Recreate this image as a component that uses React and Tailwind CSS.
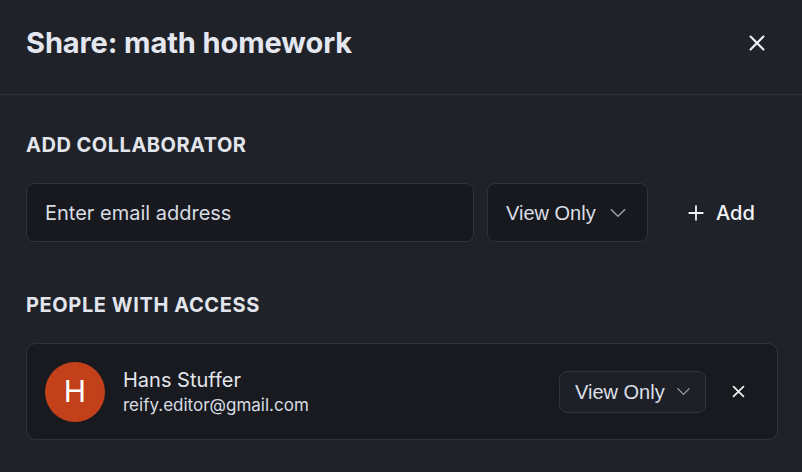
import React from 'react';

const Chevron = ({ className }) => (
  <svg className={className} viewBox="0 0 24 24" fill="none" stroke="currentColor" strokeWidth="1.8" strokeLinecap="round" strokeLinejoin="round">
    <path d="M4 8l8 8 8-8" />
  </svg>
);

const Cross = ({ className }) => (
  <svg className={className} viewBox="0 0 24 24" fill="none" stroke="currentColor" strokeWidth="2.4" strokeLinecap="round">
    <path d="M5 5l14 14M19 5L5 19" />
  </svg>
);

const App = () => {
  return (
    <div className="w-[802px] h-[472px] bg-[#1f2229] text-[#e5e7ee] overflow-hidden" style={{ fontFamily: 'Inter, "Noto Sans", sans-serif' }}>
      <div className="h-[95px] flex items-center justify-between pl-[26px] pr-[34px] border-b border-[#2f333c]">
        <h2 className="text-[29px] font-bold tracking-[-0.1px] text-[#e4e7ef] -mt-[8px]">Share: math homework</h2>
        <button className="text-[#eef0f4] -mt-[8px]">
          <Cross className="w-[22px] h-[22px]" />
        </button>
      </div>

      <div className="px-[26px]">
        <h3 className="mt-[36px] text-[20px] leading-[28px] font-bold tracking-[0.5px] text-[#e2e5ec]">ADD COLLABORATOR</h3>

        <div className="mt-[24px] flex items-center h-[59px]">
          <div className="w-[448px] h-full rounded-[8px] border border-[#30333c] bg-[#17191f] flex items-center px-[18px] text-[20px] text-[#d9dce3]">
            Enter email address
          </div>
          <div className="ml-[13px] w-[161px] h-full rounded-[8px] border border-[#30333c] bg-[#17191f] flex items-center pl-[18px] text-[20px] text-[#dcdfe6]" style={{ fontFamily: '"Liberation Sans", Arial, sans-serif' }}>
            View Only
            <Chevron className="ml-[12px] w-[20px] h-[20px] text-[#9a9ea8]" />
          </div>
          <button className="ml-[39px] flex items-center text-[20px] font-medium text-[#f3f4f7]">
            <svg className="w-[18px] h-[18px] mr-[11px]" viewBox="0 0 24 24" fill="none" stroke="currentColor" strokeWidth="2.4" strokeLinecap="round">
              <path d="M12 3v18M3 12h18" />
            </svg>
            Add
          </button>
        </div>

        <h3 className="mt-[49px] text-[20px] leading-[28px] font-bold tracking-[0.6px] text-[#e2e5ec]">PEOPLE WITH ACCESS</h3>

        <div className="mt-[24px] w-[752px] h-[97px] rounded-[10px] border border-[#30333c] bg-[#181a20] flex items-center pl-[18px] pr-[30px]">
          <div className="w-[60px] h-[60px] rounded-full bg-[#c2401a] flex items-center justify-center text-[30px] text-white">H</div>
          <div className="ml-[18px] flex flex-col">
            <span className="text-[20px] leading-[26px] text-[#e2e5ec]">Hans Stuffer</span>
            <span className="text-[17px] leading-[24px] text-[#d9dce3]">reify.editor@gmail.com</span>
          </div>
          <div className="ml-auto w-[147px] h-[42px] rounded-[8px] border border-[#30333c] bg-[#1d2027] flex items-center pl-[15px] text-[20px] text-[#dcdfe6]" style={{ fontFamily: '"Liberation Sans", Arial, sans-serif' }}>
            View Only
            <Chevron className="ml-[10px] w-[17px] h-[17px] text-[#9a9ea8]" />
          </div>
          <button className="ml-[24px] text-[#eef0f4]">
            <Cross className="w-[17px] h-[17px]" />
          </button>
        </div>
      </div>
    </div>
  );
};

export default App;
